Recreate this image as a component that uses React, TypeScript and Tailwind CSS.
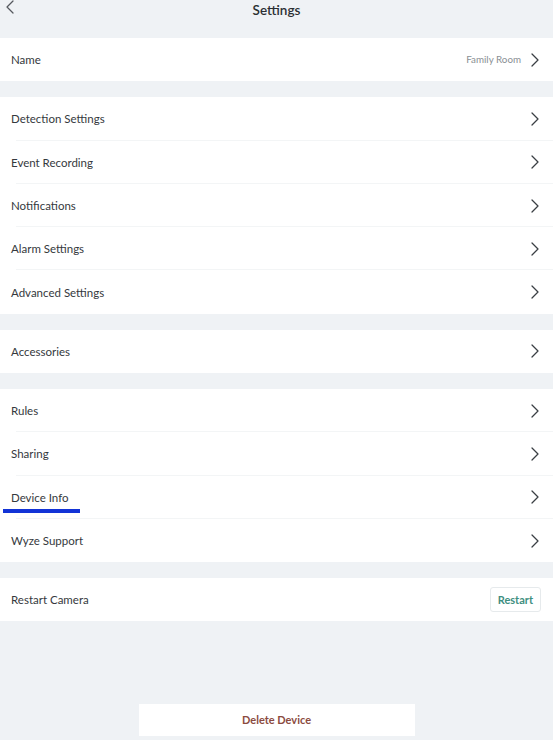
import { ChevronLeft, ChevronRight } from "lucide-react";

type Row = { label: string; value?: string; mark?: boolean };

const groups: Row[][] = [
  [{ label: "Name", value: "Family Room" }],
  [
    { label: "Detection Settings" },
    { label: "Event Recording" },
    { label: "Notifications" },
    { label: "Alarm Settings" },
    { label: "Advanced Settings" },
  ],
  [{ label: "Accessories" }],
  [
    { label: "Rules" },
    { label: "Sharing" },
    { label: "Device Info", mark: true },
    { label: "Wyze Support" },
  ],
];

function SettingRow({ row, last }: { row: Row; last: boolean }) {
  return (
    <div className="relative flex h-[43.3px] items-center justify-between pl-[11px] pr-[6px]">
      <span className="text-[11.5px] text-[#35393d]">{row.label}</span>
      <div className="flex items-center gap-[2px]">
        {row.value && <span className="text-[9.8px] text-[#8a8f94]">{row.value}</span>}
        <ChevronRight size={24} strokeWidth={1.25} className="text-[#3a3f44]" />
      </div>
      {row.mark && (
        <div className="absolute left-[3px] top-[33px] h-[4px] w-[77px] bg-[#1233d6]" />
      )}
      {!last && <div className="absolute bottom-0 left-[16px] right-0 h-px bg-[#f3f5f6]" />}
    </div>
  );
}

export default function App() {
  return (
    <div className="min-h-[740px] bg-[#eff2f5] font-['Lato',sans-serif]">
      <div className="relative flex h-[38px] items-start justify-center">
        <ChevronLeft
          size={24}
          strokeWidth={1.25}
          className="absolute left-[-2px] top-[-5px] text-[#55595e]"
        />
        <h1 className="text-[13.5px] font-semibold text-[#2b2f33]">Settings</h1>
      </div>

      <div className="flex flex-col gap-[16px]">
        {groups.map((g, i) => (
          <div key={i} className="bg-white">
            {g.map((row, j) => (
              <SettingRow key={row.label} row={row} last={j === g.length - 1} />
            ))}
          </div>
        ))}

        <div className="flex h-[43px] items-center justify-between bg-white pl-[11px] pr-[12px]">
          <span className="text-[11.5px] text-[#35393d]">Restart Camera</span>
          <button className="h-[25px] rounded-[3px] border border-[#e6eaec] px-[7px] text-[11px] font-bold text-[#3f8f81]">
            Restart
          </button>
        </div>
      </div>

      <div className="flex justify-center pt-[83px]">
        <button className="h-[32px] w-[276px] bg-white text-[11px] font-bold text-[#8b4b3f]">
          Delete Device
        </button>
      </div>
    </div>
  );
}
